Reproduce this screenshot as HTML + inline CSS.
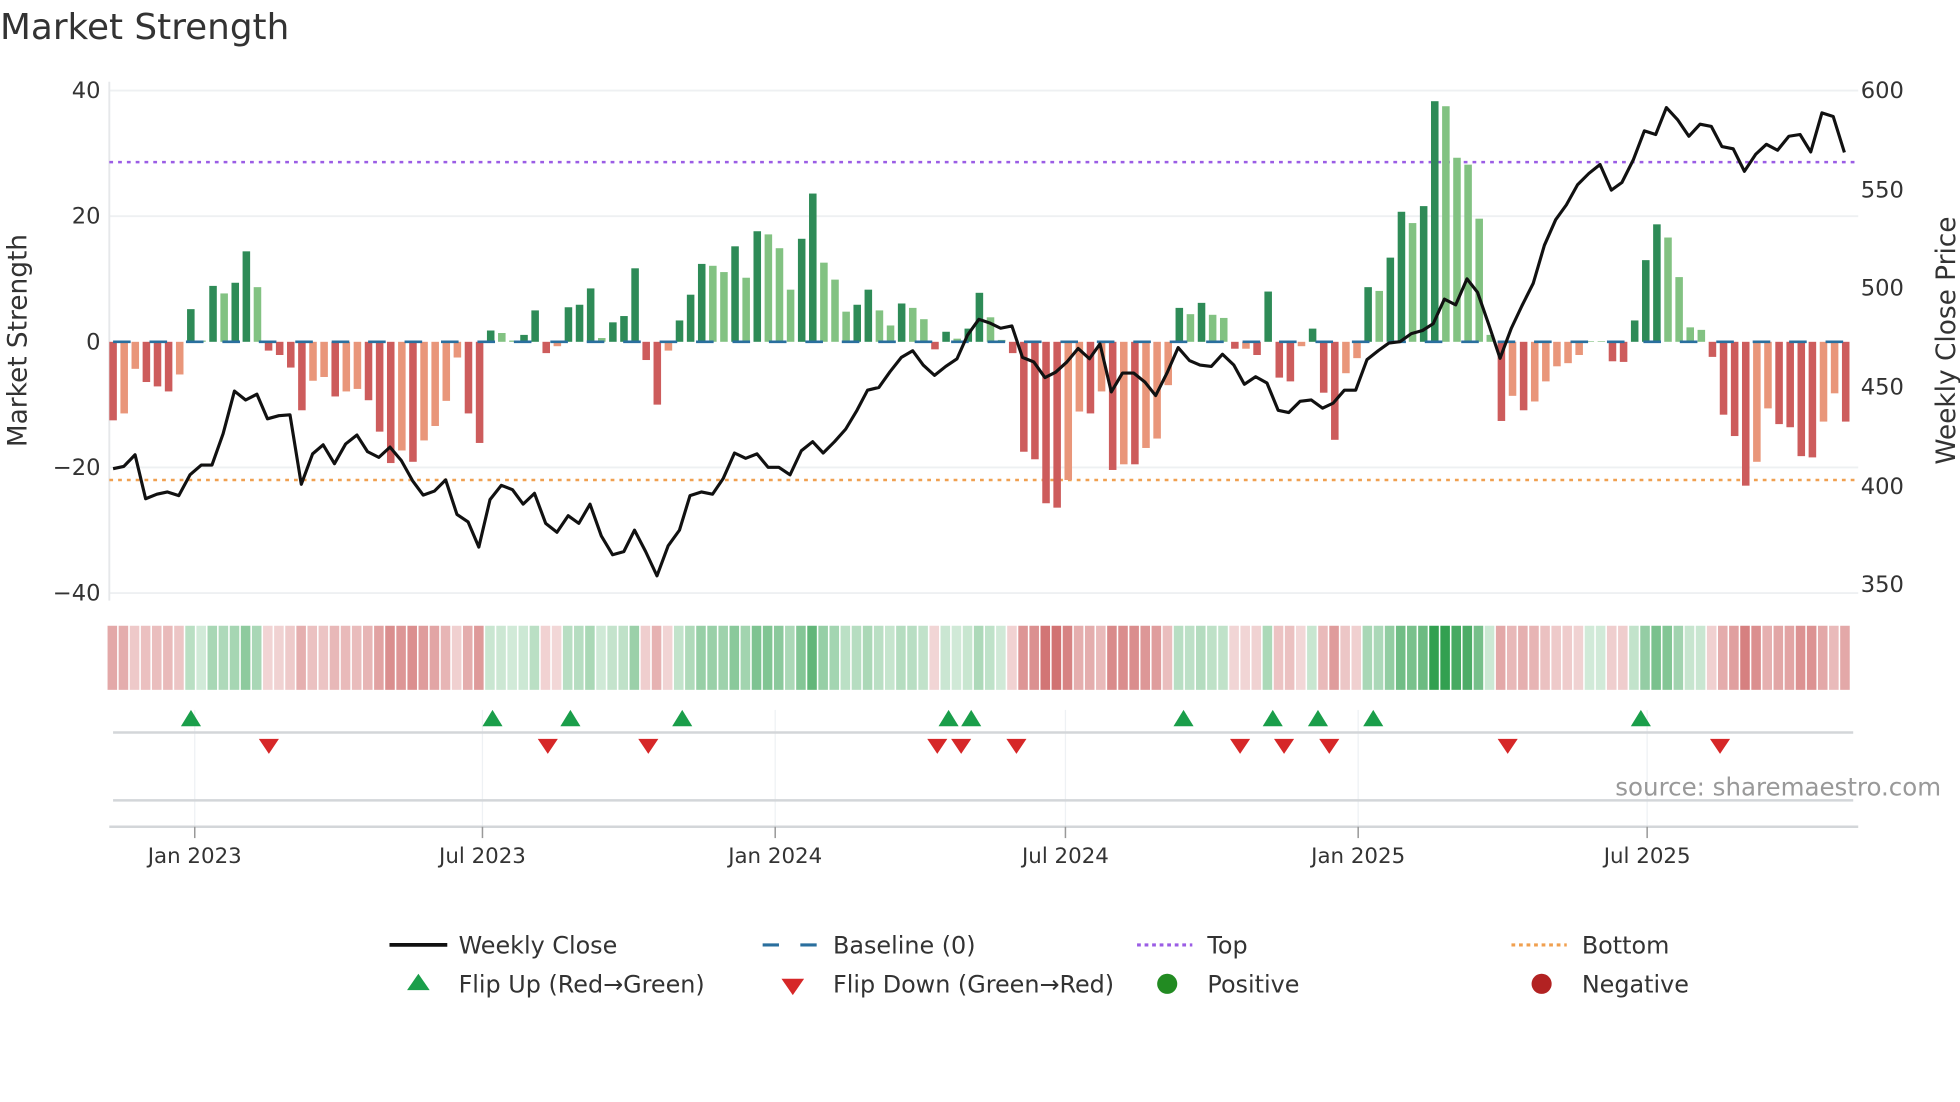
<!DOCTYPE html>
<html><head><meta charset="utf-8"><style>
html,body{margin:0;padding:0;background:#fff;}
svg{display:block;font-family:"DejaVu Sans","Liberation Sans",sans-serif;}
</style></head><body>
<svg id="s" width="1960" height="1102" viewBox="0 0 1560 877" xmlns="http://www.w3.org/2000/svg">
<rect width="1560" height="877" fill="#fff"/>
<text x="0" y="31" font-size="28.5" fill="#333">Market Strength</text>
<g stroke="#eef0f2" stroke-width="1.5">
<line x1="87" y1="72" x2="1479" y2="72"/><line x1="87" y1="172" x2="1479" y2="172"/>
<line x1="87" y1="372" x2="1479" y2="372"/><line x1="87" y1="472" x2="1479" y2="472"/>
</g>
<line x1="87" y1="65" x2="87" y2="478" stroke="#e6e8ea" stroke-width="1.5"/>
<g font-size="18" fill="#333" text-anchor="end">
<text x="80" y="78">40</text><text x="80" y="178">20</text><text x="80" y="278">0</text>
<text x="80" y="378">−20</text><text x="80" y="478">−40</text>
</g>
<g font-size="18" fill="#333">
<text x="1481" y="78">600</text><text x="1481" y="157">550</text><text x="1481" y="235">500</text>
<text x="1481" y="314">450</text><text x="1481" y="393">400</text><text x="1481" y="471">350</text>
</g>
<text transform="translate(21,271) rotate(-90)" font-size="21" fill="#333" text-anchor="middle">Market Strength</text>
<text transform="translate(1556,271) rotate(-90)" font-size="21" fill="#333" text-anchor="middle">Weekly Close Price</text>
<line x1="87" y1="129" x2="1479" y2="129" stroke="#9b5de5" stroke-width="2" stroke-dasharray="3,4"/>
<line x1="87" y1="382" x2="1479" y2="382" stroke="#f0a050" stroke-width="2" stroke-dasharray="3,4"/>
<g id="bars"></g>
<line x1="90" y1="272" x2="1476" y2="272" stroke="#2a6f9e" stroke-width="2" stroke-dasharray="14,15"/>
<polyline id="price" fill="none" stroke="#111" stroke-width="2.5" stroke-linejoin="round"/>
<g id="heat"></g>
<g stroke="#eef1f4" stroke-width="1">
<line x1="155" y1="565" x2="155" y2="660"/><line x1="384" y1="565" x2="384" y2="660"/>
<line x1="617" y1="565" x2="617" y2="660"/><line x1="848" y1="565" x2="848" y2="660"/>
<line x1="1081" y1="565" x2="1081" y2="660"/><line x1="1311" y1="565" x2="1311" y2="660"/>
</g>
<line x1="90" y1="583" x2="1475" y2="583" stroke="#d3d6d9" stroke-width="2"/>
<line x1="90" y1="637" x2="1475" y2="637" stroke="#d3d6d9" stroke-width="2"/>
<line x1="87" y1="658" x2="1479" y2="658" stroke="#d3d6d9" stroke-width="2"/>
<g stroke="#999" stroke-width="1.2">
<line x1="155" y1="658" x2="155" y2="667"/><line x1="384" y1="658" x2="384" y2="667"/>
<line x1="617" y1="658" x2="617" y2="667"/><line x1="848" y1="658" x2="848" y2="667"/>
<line x1="1081" y1="658" x2="1081" y2="667"/><line x1="1311" y1="658" x2="1311" y2="667"/>
</g>
<g font-size="17" fill="#333" text-anchor="middle">
<text x="155" y="687">Jan 2023</text><text x="384" y="687">Jul 2023</text><text x="617" y="687">Jan 2024</text>
<text x="848" y="687">Jul 2024</text><text x="1081" y="687">Jan 2025</text><text x="1311" y="687">Jul 2025</text>
</g>
<text x="1545" y="633" font-size="19.5" fill="#999" text-anchor="end">source: sharemaestro.com</text>
<g id="flips"></g>
<g font-size="19" fill="#333">
<line x1="310" y1="752" x2="356" y2="752" stroke="#111" stroke-width="3"/>
<text x="365" y="759">Weekly Close</text>
<line x1="607" y1="752" x2="651" y2="752" stroke="#2a6f9e" stroke-width="2.5" stroke-dasharray="13,17"/>
<text x="663" y="759">Baseline (0)</text>
<line x1="905" y1="752" x2="949" y2="752" stroke="#9b5de5" stroke-width="2.5" stroke-dasharray="3,3"/>
<text x="961" y="759">Top</text>
<line x1="1203" y1="752" x2="1247" y2="752" stroke="#f0a050" stroke-width="2.5" stroke-dasharray="3,3"/>
<text x="1259" y="759">Bottom</text>
<polygon points="333,775 342,788 324,788" fill="#1a9e4a"/>
<text x="365" y="790">Flip Up (Red→Green)</text>
<polygon points="622,779 640,779 631,792" fill="#d62728"/>
<text x="663" y="790">Flip Down (Green→Red)</text>
<circle cx="929" cy="783" r="8" fill="#228b22"/>
<text x="961" y="790">Positive</text>
<circle cx="1227" cy="783" r="8" fill="#b22222"/>
<text x="1259" y="790">Negative</text>
</g>
</svg>
<script>
var NS="http://www.w3.org/2000/svg";
var d=[[-12.5,'R'],[-11.4,'S'],[-4.3,'S'],[-6.4,'R'],[-7.1,'R'],[-7.9,'R'],[-5.2,'S'],[5.2,'D'],[0.2,'L'],[8.9,'D'],[7.7,'L'],[9.4,'D'],[14.4,'D'],[8.7,'L'],[-1.4,'R'],[-2.1,'R'],[-4.1,'R'],[-10.9,'R'],[-6.2,'S'],[-5.6,'S'],[-8.7,'R'],[-7.9,'S'],[-7.5,'S'],[-9.3,'R'],[-14.3,'R'],[-19.3,'R'],[-17.3,'S'],[-19.1,'R'],[-15.7,'S'],[-13.4,'S'],[-9.4,'S'],[-2.5,'S'],[-11.4,'R'],[-16.1,'R'],[1.8,'D'],[1.4,'L'],[0.2,'L'],[1.1,'D'],[5.0,'D'],[-1.8,'R'],[-0.7,'S'],[5.5,'D'],[5.9,'D'],[8.5,'D'],[0.6,'L'],[3.1,'D'],[4.1,'D'],[11.7,'D'],[-2.9,'R'],[-10,'R'],[-1.4,'S'],[3.4,'D'],[7.5,'D'],[12.4,'D'],[12.1,'L'],[11.1,'L'],[15.2,'D'],[10.2,'L'],[17.6,'D'],[17.1,'L'],[14.9,'L'],[8.3,'L'],[16.4,'D'],[23.6,'D'],[12.6,'L'],[9.9,'L'],[4.8,'L'],[5.9,'D'],[8.3,'D'],[5.0,'L'],[2.6,'L'],[6.1,'D'],[5.4,'L'],[3.6,'L'],[-1.2,'R'],[1.6,'D'],[0.5,'L'],[2.1,'D'],[7.8,'D'],
[3.9,'L'],[0.3,'L'],[-1.8,'R'],[-17.5,'R'],[-18.7,'R'],[-25.7,'R'],[-26.4,'R'],[-22,'S'],[-11.1,'S'],[-11.4,'R'],[-7.9,'S'],[-20.4,'R'],[-19.5,'S'],[-19.5,'R'],[-16.9,'S'],[-15.4,'S'],[-6.9,'S'],[5.4,'D'],[4.4,'L'],[6.2,'D'],[4.3,'L'],[3.8,'L'],[-1.1,'R'],[-1.1,'S'],[-2.1,'R'],[8.0,'D'],[-5.7,'R'],[-6.3,'R'],[-0.7,'S'],[2.1,'D'],[-8.1,'R'],[-15.6,'R'],[-5.0,'S'],[-2.6,'S'],[8.7,'D'],[8.1,'L'],[13.4,'D'],[20.7,'D'],[18.9,'L'],[21.6,'D'],[38.3,'D'],[37.5,'L'],[29.3,'L'],[28.2,'L'],[19.6,'L'],[1.1,'L'],[-12.6,'R'],[-8.6,'S'],[-10.9,'R'],[-9.5,'S'],[-6.3,'S'],[-3.9,'S'],[-3.4,'S'],[-2.1,'S'],[0.1,'L'],[0.1,'L'],[-3.1,'R'],[-3.2,'R'],[3.4,'D'],[13,'D'],[18.7,'D'],[16.6,'L'],[10.3,'L'],[2.3,'L'],[1.9,'L'],[-2.4,'R'],[-11.6,'R'],[-15,'R'],[-22.9,'R'],[-19.1,'S'],[-10.6,'S'],[-13.1,'R'],[-13.6,'R'],[-18.2,'R'],[-18.4,'R'],[-12.7,'S'],[-8.2,'S'],[-12.7,'R']];
var col={D:'#2e8b57',L:'#82c282',R:'#cd5c5c',S:'#e9967a'};
var bars=document.getElementById('bars'),heat=document.getElementById('heat');
for(var i=0;i<d.length;i++){
 var x=90+8.84*i,v=d[i][0],h=Math.abs(v)*5;
 var r=document.createElementNS(NS,'rect');
 r.setAttribute('x',x-3);r.setAttribute('width',6);
 r.setAttribute('y',v>=0?272-h:272);r.setAttribute('height',Math.max(h,0.5));
 r.setAttribute('fill',col[d[i][1]]);bars.appendChild(r);
 var c=document.createElementNS(NS,'rect');
 c.setAttribute('x',x-4.4);c.setAttribute('width',7.6);c.setAttribute('y',498);c.setAttribute('height',51);
 var a=Math.min(1,0.22+Math.abs(v)/26*0.6);
 c.setAttribute('fill',v>=0.05?'rgba(50,160,80,'+a+')':'rgba(200,85,85,'+a+')');
 heat.appendChild(c);
}
var p1=[181,1043,198,1038,216,1012,233,1110,251,1100,268,1095,286,1103,304,1057,322,1035,339,1035,357,965,375,870,393,890,411,877,428,932,446,925,464,923,482,1078,500,1010,517,990,535,1032,553,988,571,968,588,1005,606,1018,624,995,642,1025,660,1070,677,1102,695,1093,713,1068,731,1145,749,1162,766,1218,784,1112,802,1080,820,1090,837,1122,855,1098,873,1165,891,1185,909,1148,926,1165,944,1122,962,1193,980,1235,998,1228,1015,1180,1033,1228,1051,1282,1069,1215,1087,1180,1104,1103,1122,1095,1140,1100,1157,1065,1175,1008,1193,1020,1211,1010,1229,1040,1246,1040,1264,1057,1282,1003,1300,983,1317,1008,1335,983,1353,955,1371,913,1388,868,1406,862,1424,827,1442,795,1460,780,1477,812,1495,835,1513,815,1531,798,1548,745,1566,710];
var p2=[15,718,33,730,51,725,68,795,86,805,104,840,121,828,139,805,157,775,175,798,192,765,210,872,228,830,246,830,264,850,281,880,299,830,317,773,335,802,352,812,370,815,388,788,406,812,423,855,441,838,459,852,477,913,494,918,512,893,530,890,548,908,565,897,583,868,601,868,619,800,637,780,654,763,672,760,690,742,708,735,725,720,743,665,761,678,779,620,796,650,814,722,832,797,850,730,867,680,885,630,903,545,921,488,938,455,956,410,974,385,992,365,1010,422,1027,405,1045,355,1063,290,1081,298,1098,238,1116,265,1134,302,1152,275,1170,280,1187,325,1205,330,1223,380,1241,342,1258,320,1276,333,1294,302,1312,298,1329,337,1347,250,1365,258,1383,338];
var pts=[];
for(var i=0;i<p1.length;i+=2)pts.push((p1[i]*0.4975).toFixed(1)+','+(p1[i+1]*0.357+0.6).toFixed(1));
for(var i=0;i<p2.length;i+=2)pts.push((780+p2[i]*0.4975).toFixed(1)+','+(p2[i+1]*0.357+0.6).toFixed(1));
document.getElementById('price').setAttribute('points',pts.join(' '));
var fl=document.getElementById('flips');
[152,392,454,543,755,773,942,1013,1049,1093,1306].forEach(function(x){
 var t=document.createElementNS(NS,'polygon');t.setAttribute('points',x+',565 '+(x+8)+',578 '+(x-8)+',578');t.setAttribute('fill','#1a9e4a');fl.appendChild(t);});
[214,436,516,746,765,809,987,1022,1058,1200,1369].forEach(function(x){
 var t=document.createElementNS(NS,'polygon');t.setAttribute('points',(x-8)+',588 '+(x+8)+',588 '+x+',600');t.setAttribute('fill','#d62728');fl.appendChild(t);});
</script>
</body></html>
